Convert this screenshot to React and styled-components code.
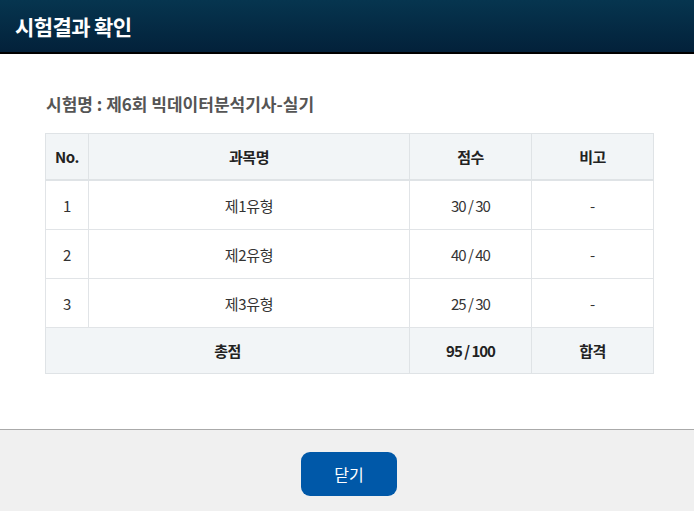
import styled, { createGlobalStyle } from 'styled-components';

const GlobalStyle = createGlobalStyle`
  html, body {
    margin: 0;
    padding: 0;
    background: #ffffff;
  }
  body {
    font-family: "Noto Sans CJK KR", "Noto Sans", sans-serif;
  }
`;

const Modal = styled.div`
  width: 694px;
  height: 511px;
  display: flex;
  flex-direction: column;
  background: #fff;
`;

const Header = styled.header`
  height: 52px;
  flex-shrink: 0;
  display: flex;
  align-items: center;
  padding: 0 15px;
  background: linear-gradient(180deg, #06354f 0%, #03213a 100%);
  border-bottom: 2px solid #000;
`;

const Title = styled.h1`
  margin: 0;
  color: #fff;
  font-size: 21px;
  font-weight: 700;
  letter-spacing: -0.6px;
`;

const Body = styled.main`
  flex: 1;
  padding: 35px 41px 0 45px;
`;

const ExamName = styled.h2`
  margin: 0 0 14px 1px;
  color: #555;
  font-size: 17px;
  font-weight: 700;
  letter-spacing: 0;
  line-height: 30px;
`;

const Table = styled.table`
  width: 608px;
  border-collapse: collapse;
  table-layout: fixed;
  color: #333;
  font-size: 15px;
`;

const Th = styled.th`
  height: 45px;
  background: #f2f5f7;
  border: 1px solid #dfe3e6;
  border-bottom: 2px solid #dfe3e6;
  color: #222;
  font-weight: 700;
  letter-spacing: -0.5px;
  padding: 0;
`;

const Td = styled.td`
  height: 48px;
  border: 1px solid #e1e4e7;
  text-align: center;
  padding: 0;
  letter-spacing: ${({ $tight }) => ($tight ? '-1px' : '-0.3px')};
`;

const TotalCell = styled.td`
  height: 45px;
  background: #f2f5f7;
  border: 1px solid #dfe3e6;
  text-align: center;
  padding: 0;
  color: #222;
  font-weight: 700;
  letter-spacing: ${({ $tight }) => ($tight ? '-1px' : '-0.5px')};
`;

const Footer = styled.footer`
  height: 82px;
  flex-shrink: 0;
  background: #f0f0f0;
  border-top: 1px solid #aaa;
  display: flex;
  justify-content: center;
  padding: 22px 0 0 4px;
  box-sizing: border-box;
`;

const CloseButton = styled.button`
  width: 96px;
  height: 44px;
  border: 0;
  border-radius: 9px;
  background: #0058a8;
  color: #fff;
  font-family: inherit;
  font-size: 16px;
  cursor: pointer;
`;

const rows = [
  { no: 1, subject: '제1유형', score: '30 / 30', note: '-' },
  { no: 2, subject: '제2유형', score: '40 / 40', note: '-' },
  { no: 3, subject: '제3유형', score: '25 / 30', note: '-' },
];

export default function App() {
  return (
    <>
      <GlobalStyle />
      <Modal>
        <Header>
          <Title>시험결과 확인</Title>
        </Header>
        <Body>
          <ExamName>시험명 : 제6회 빅데이터분석기사-실기</ExamName>
          <Table>
            <colgroup>
              <col style={{ width: 43 }} />
              <col style={{ width: 321 }} />
              <col style={{ width: 122 }} />
              <col style={{ width: 122 }} />
            </colgroup>
            <thead>
              <tr>
                <Th>No.</Th>
                <Th>과목명</Th>
                <Th>점수</Th>
                <Th>비고</Th>
              </tr>
            </thead>
            <tbody>
              {rows.map((row) => (
                <tr key={row.no}>
                  <Td>{row.no}</Td>
                  <Td>{row.subject}</Td>
                  <Td $tight>{row.score}</Td>
                  <Td>{row.note}</Td>
                </tr>
              ))}
              <tr>
                <TotalCell colSpan={2}>총점</TotalCell>
                <TotalCell $tight>95 / 100</TotalCell>
                <TotalCell>합격</TotalCell>
              </tr>
            </tbody>
          </Table>
        </Body>
        <Footer>
          <CloseButton>닫기</CloseButton>
        </Footer>
      </Modal>
    </>
  );
}
